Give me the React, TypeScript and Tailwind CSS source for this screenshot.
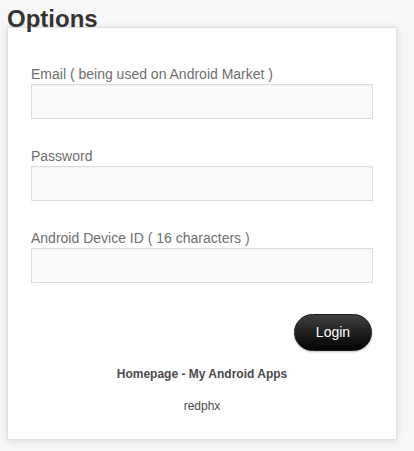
import React from "react";

function Field({ label, type = "text" }: { label: string; type?: string }) {
  return (
    <div className="flex flex-col">
      <label className="text-[14px] leading-[16px] text-[#6e6e6e] mb-[2px]">{label}</label>
      <input
        type={type}
        className="h-[35px] w-full border border-[#dcdcdc] bg-[#fafafa] shadow-[inset_0_1px_2px_rgba(0,0,0,0.04)] outline-none px-2 text-[14px]"
      />
    </div>
  );
}

export default function App() {
  return (
    <div
      className="min-h-[451px] w-[414px] bg-[#f7f7f7] pl-[7px] pt-[7px]"
      style={{ fontFamily: '"Liberation Sans", Arial, sans-serif' }}
    >
      <h1 className="relative z-10 text-[24px] leading-[24px] font-bold text-[#333]">Options</h1>
      <div className="-mt-[4px] w-[390px] h-[413px] bg-white border border-[#e0e0e0] shadow-[0_1px_7px_rgba(0,0,0,0.12)] px-[23px] pt-[38px]">
        <div className="flex flex-col gap-[29px]">
          <Field label="Email ( being used on Android Market )" />
          <Field label="Password" type="password" />
          <Field label="Android Device ID ( 16 characters )" />
        </div>
        <div className="flex justify-end mt-[31px] pr-[1px]">
          <button className="h-[37px] w-[78px] rounded-full border border-[#1a1a1a] bg-gradient-to-b from-[#404040] to-[#050505] text-white text-[14px] shadow-[0_1px_2px_rgba(0,0,0,0.25)]">
            Login
          </button>
        </div>
        <div className="mt-[16px] text-center text-[12px] leading-[14px] font-bold text-[#4a4a4a]">
          Homepage - My Android Apps
        </div>
        <div className="mt-[18px] text-center text-[12px] leading-[14px] text-[#4a4a4a]">redphx</div>
      </div>
    </div>
  );
}
